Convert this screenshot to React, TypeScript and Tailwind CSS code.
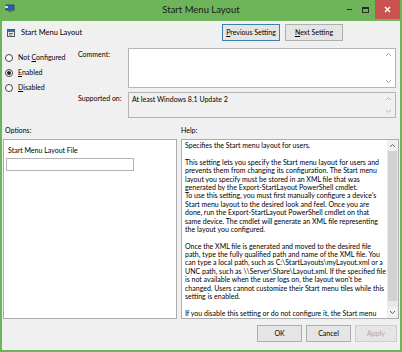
import React from 'react'

const helpLines = [
  'Specifies the Start menu layout for users.',
  '',
  'This setting lets you specify the Start menu layout for users and',
  'prevents them from changing its configuration. The Start menu',
  'layout you specify must be stored in an XML file that was',
  'generated by the Export-StartLayout PowerShell cmdlet.',
  "To use this setting, you must first manually configure a device's",
  'Start menu layout to the desired look and feel. Once you are',
  'done, run the Export-StartLayout PowerShell cmdlet on that',
  'same device. The cmdlet will generate an XML file representing',
  'the layout you configured.',
  '',
  'Once the XML file is generated and moved to the desired file',
  'path, type the fully qualified path and name of the XML file. You',
  'can type a local path, such as C:\\StartLayouts\\myLayout.xml or a',
  'UNC path, such as \\\\Server\\Share\\Layout.xml. If the specified file',
  "is not available when the user logs on, the layout won't be",
  'changed. Users cannot customize their Start menu tiles while this',
  'setting is enabled.',
  '',
  'If you disable this setting or do not configure it, the Start menu',
]

const Chevron = ({ up, color = '#a6a6a6' }: { up?: boolean; color?: string }) => (
  <svg width="7" height="5" viewBox="0 0 7 5">
    <polyline
      points={up ? '1,4 3.5,1.5 6,4' : '1,1 3.5,3.5 6,1'}
      fill="none"
      stroke={color}
      strokeWidth="1"
    />
  </svg>
)

const Radio = ({ label, accel, checked }: { label: string; accel: string; checked?: boolean }) => {
  const i = label.indexOf(accel)
  return (
    <div className="flex h-[15px] items-center gap-[5px]">
      <div className="flex h-[8px] w-[8px] items-center justify-center rounded-full border border-[#444] bg-white">
        {checked && <div className="h-[4px] w-[4px] rounded-full bg-[#222]" />}
      </div>
      <span>
        {label.slice(0, i)}
        <u>{accel}</u>
        {label.slice(i + 1)}
      </span>
    </div>
  )
}

const Btn = ({ children, w, focus, disabled }: { children: React.ReactNode; w: string; focus?: boolean; disabled?: boolean }) => (
  <div
    className={`flex h-[17px] ${w} items-center justify-center border ${
      focus ? 'border-[#3c7fb1]' : disabled ? 'border-[#cfcfcf]' : 'border-[#adadad]'
    } bg-[#e5e5e5] ${disabled ? 'text-[#a8a8a8]' : 'text-black'}`}
  >
    {children}
  </div>
)

export default function App() {
  return (
    <div
      className="flex h-[352px] w-[402px] flex-col bg-[#6db45b] px-[2px] pb-[2px] text-[7px] text-black"
      style={{ fontFamily: '"Lato", "Open Sans", sans-serif' }}
    >
      {/* title bar */}
      <div className="relative flex h-[21px] items-center justify-center">
        <svg className="absolute left-[3px] top-[4px]" width="10" height="9" viewBox="0 0 10 9">
          <rect x="1" y="1" width="8" height="5" fill="#2f5fb8" stroke="#1c3a7a" strokeWidth="0.8" />
          <rect x="3" y="6.5" width="4" height="1.5" fill="#6b6b6b" />
          <rect x="0" y="2" width="3" height="2" fill="#d9d9d9" />
        </svg>
        <span className="text-[9.5px] text-[#1a1a1a]">Start Menu Layout</span>
        <div className="absolute right-[0px] top-0 flex h-[19px] items-center">
          <div className="mr-[10px] h-[1.5px] w-[5px] bg-[#2a2a2a]" />
          <div className="mr-[6px] h-[6px] w-[7px] border border-t-2 border-[#2a2a2a]" />
          <div className="flex h-[19px] w-[25px] items-center justify-center bg-[#c9514f]">
            <svg width="7" height="7" viewBox="0 0 7 7">
              <path d="M1 1 L6 6 M6 1 L1 6" stroke="white" strokeWidth="1.4" />
            </svg>
          </div>
        </div>
      </div>

      {/* client area */}
      <div className="flex flex-1 flex-col bg-[#f0f0f0]">
        <div className="flex h-[23px] items-center pl-[5px] pr-[57px]">
          <svg width="8" height="8" viewBox="0 0 8 8">
            <rect x="0.5" y="0.5" width="7" height="7" fill="#e8e8e8" stroke="#555" strokeWidth="1" />
            <rect x="1" y="1" width="6" height="2" fill="#3d6fb5" />
            <rect x="2" y="4" width="4" height="1" fill="#777" />
            <rect x="2" y="5.5" width="3" height="1" fill="#4a9a4a" />
          </svg>
          <span className="ml-[6px] text-[7.5px]">Start Menu Layout</span>
          <div className="ml-auto flex gap-[5px]">
            <Btn w="w-[58px]" focus>
              <span>
                <u>P</u>revious Setting
              </span>
            </Btn>
            <Btn w="w-[58px]">
              <span>
                <u>N</u>ext Setting
              </span>
            </Btn>
          </div>
        </div>

        <div className="flex">
          <div className="flex w-[76px] flex-col pl-[3px] pt-[6px]">
            <Radio label="Not Configured" accel="C" />
            <Radio label="Enabled" accel="E" checked />
            <Radio label="Disabled" accel="D" />
          </div>
          <div className="flex flex-col gap-[4px] pt-[4px]">
            <div className="flex">
              <div className="w-[50px] pt-[1px]">Comment:</div>
              <div className="flex h-[40px] w-[268px] flex-col items-end justify-between border border-[#b4b4b4] bg-white py-[3px] pr-[3px]">
                <Chevron up />
                <Chevron />
              </div>
            </div>
            <div className="flex">
              <div className="w-[50px] pt-[1px]">Supported on:</div>
              <div className="flex h-[26px] w-[268px] justify-between border border-[#b4b4b4] bg-[#f0f0f0] pl-[3px] pr-[3px] pt-[1px]">
                <span>At least Windows 8.1 Update 2</span>
                <div className="flex flex-col justify-between pb-[3px] pt-[2px]">
                  <Chevron up color="#b8b8b8" />
                  <Chevron color="#b8b8b8" />
                </div>
              </div>
            </div>
          </div>
        </div>

        <div className="mt-[4px] flex h-[17px] items-center">
          <div className="w-[179px] pl-[3px]">Options:</div>
          <div>Help:</div>
        </div>

        <div className="flex h-[180px] gap-[4px] pl-[1px] pr-[1px]">
          <div className="flex w-[174px] flex-col border border-[#acacac] bg-white px-[2px] pt-[5px]">
            <div className="pl-[2px]">Start Menu Layout File</div>
            <div className="mt-[2px] h-[13px] w-[128px] border border-[#b4b4b4] bg-white" />
          </div>
          <div className="flex flex-1 border border-[#acacac] bg-white">
            <div className="flex-1 overflow-hidden pl-[3px] pt-[1px] text-[7px] leading-[8.4px]">
              {helpLines.map((l, i) => (
                <div key={i} className="h-[8.4px] whitespace-nowrap">
                  {l}
                </div>
              ))}
            </div>
            <div className="flex w-[11px] flex-col items-center bg-[#e8e8e8]">
              <div className="flex h-[11px] w-full items-center justify-center bg-[#f0f0f0]">
                <Chevron up color="#606060" />
              </div>
              <div className="h-[150px] w-[9px] bg-[#d2d2d2]" />
              <div className="flex-1" />
              <div className="flex h-[11px] w-full items-center justify-center bg-[#f0f0f0]">
                <Chevron color="#606060" />
              </div>
            </div>
          </div>
        </div>

        <div className="mt-[6px] flex justify-end gap-[4px] pr-[3px]">
          <Btn w="w-[45px]">OK</Btn>
          <Btn w="w-[45px]">Cancel</Btn>
          <Btn w="w-[42px]" disabled>
            Apply
          </Btn>
        </div>
      </div>
    </div>
  )
}
